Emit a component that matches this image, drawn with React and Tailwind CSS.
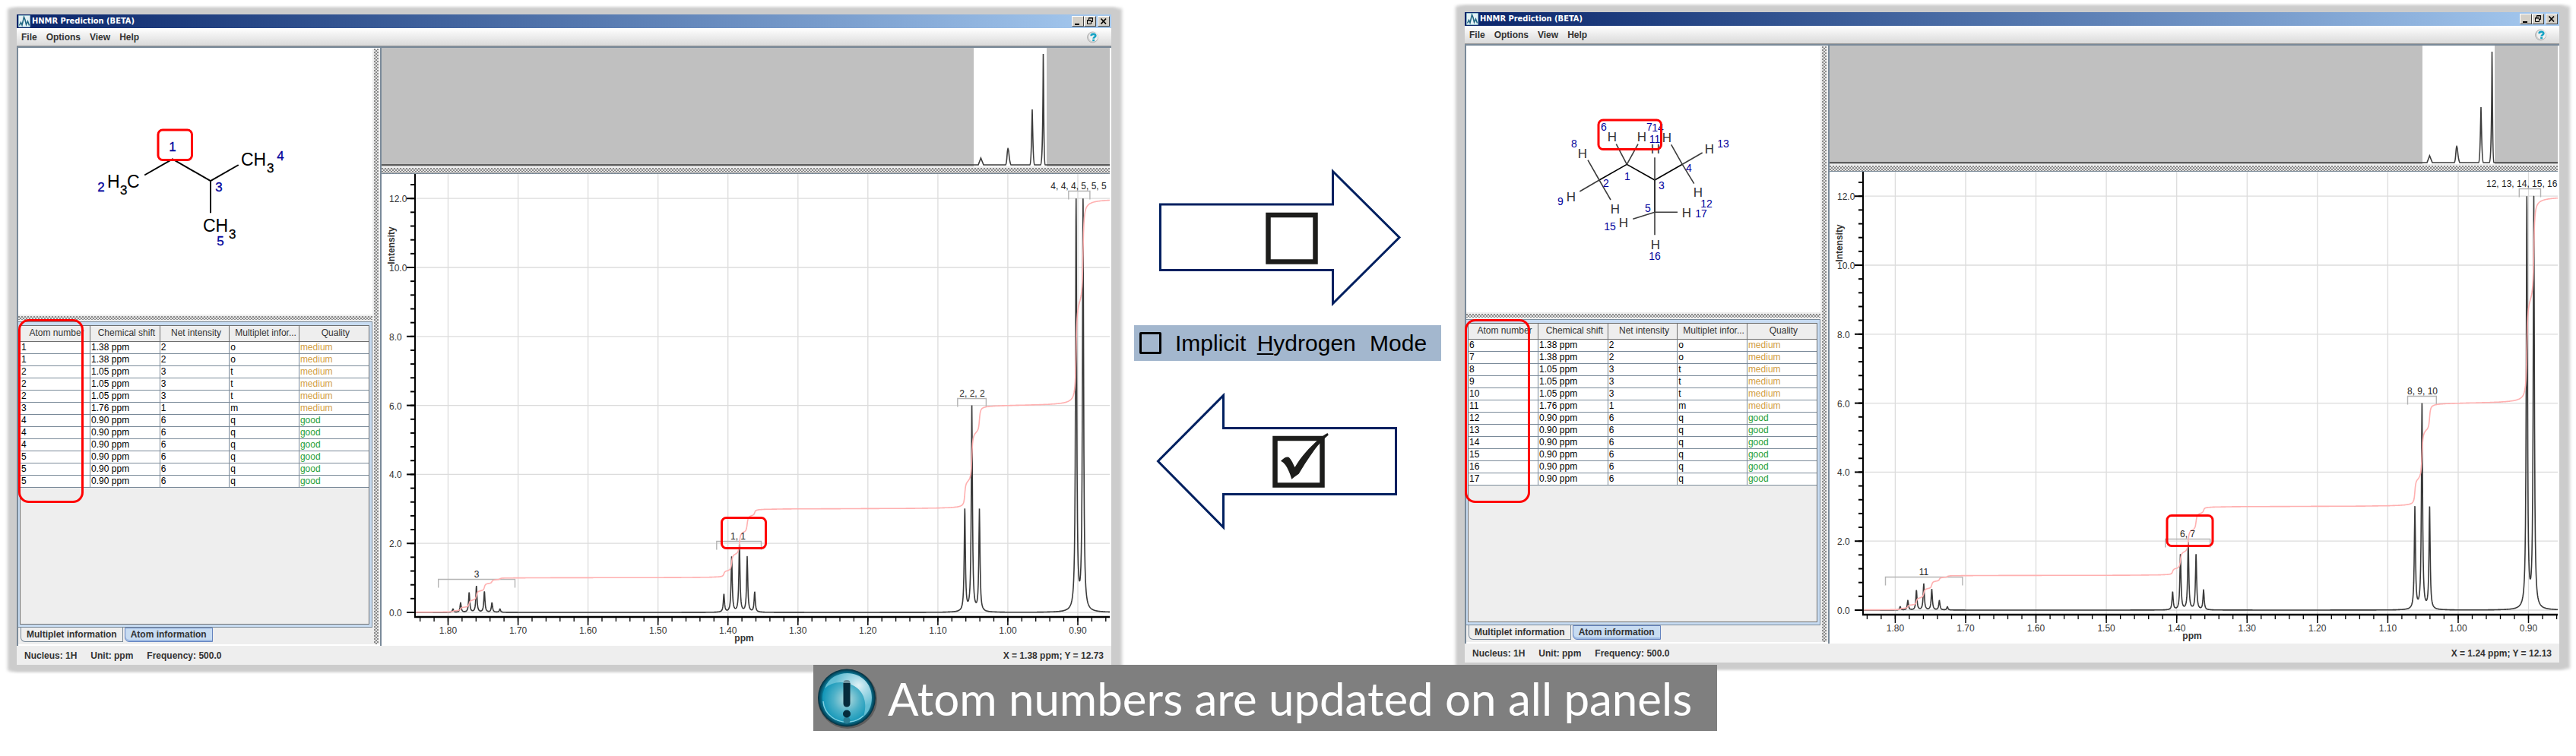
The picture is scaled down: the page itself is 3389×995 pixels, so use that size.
import React from "react";
import { clsx } from "clsx";

const SANS = "font-['Liberation_Sans',Arial,sans-serif]";

/* ---------- spectrum data ---------- */

// Lorentzian lines: [ppm, height, area]
const LINES = [
  [1.793, 0.1, 0.035],
  [1.7821, 0.28, 0.1],
  [1.7699, 0.57, 0.21],
  [1.7595, 0.76, 0.28],
  [1.7481, 0.6, 0.22],
  [1.7373, 0.28, 0.11],
  [1.7259, 0.1, 0.045],
  [1.4058, 0.52, 0.17],
  [1.3947, 1.6, 0.5],
  [1.3836, 1.95, 0.66],
  [1.3725, 1.6, 0.5],
  [1.3618, 0.58, 0.17],
  [1.0615, 2.95, 0.75],
  [1.0514, 5.95, 1.5],
  [1.0406, 2.95, 0.75],
  [0.9024, 12, 3],
  [0.8925, 12, 3],
];

const ELEMENTS_IMPLICIT = ["1", "1", "2", "2", "2", "3", "4", "4", "4", "5", "5", "5"];
const ELEMENTS_EXPLICIT = ["6", "7", "8", "9", "10", "11", "12", "13", "14", "15", "16", "17"];

function signalOf(index) {
  if (index < 2) return ["1.38 ppm", "2", "o", "medium"];
  if (index < 5) return ["1.05 ppm", "3", "t", "medium"];
  if (index < 6) return ["1.76 ppm", "1", "m", "medium"];
  return ["0.90 ppm", "6", "q", "good"];
}

const yOf = (v) => 787 - v * 45.4;

function buildCurves(x180, perPpm) {
  const lines = LINES.map(([p, h, a]) => [x180 + (1.8 - p) * perPpm, h, a]);
  const w = 0.9;
  const spectrum = [];
  const integral = [];
  const sample = (x) => {
    let s = 0;
    for (const [c, h] of lines) s += h / (1 + ((x - c) / w) ** 2);
    spectrum.push(x.toFixed(2) + "," + yOf(Math.min(s, 12)).toFixed(1));
  };
  for (let x = 525; x <= 1438; x += 0.5) {
    sample(x);
    for (const [c] of lines) if (c > x && c < x + 0.5) sample(c);
    let t = 0;
    for (const [c, , a] of lines) t += a * (0.5 + Math.atan((x - c) / w) / Math.PI);
    integral.push(x + "," + yOf(t).toFixed(1));
  }
  return { spectrum: spectrum.join(" "), integral: integral.join(" ") };
}

/* ---------- icons ---------- */

function AppIcon() {
  return (
    <svg viewBox="0 0 16 16" className="size-4 shrink-0" aria-hidden="true">
      <rect width="16" height="16" rx="1" fill="#8fbccb" />
      <rect x="1" y="1" width="14" height="14" fill="#e4f1f5" />
      <path
        d="M1.5 13.5 L3.5 9.5 L5 13 L7.5 2.5 L9 6 L10.5 12.5 L12.5 8 L14.5 13.5"
        fill="none"
        stroke="#1d6580"
        strokeWidth="1.5"
      />
    </svg>
  );
}

function HelpIcon() {
  return (
    <svg viewBox="0 0 16 16" className="size-4" aria-hidden="true">
      <circle cx="7.5" cy="8" r="7" fill="#cfcfcf" stroke="#b4b4b4" />
      <circle cx="8.5" cy="7.5" r="6" fill="#f0f0f0" />
      <path
        d="M5.6 6.2 C5.6 3.2 11.4 3 11.4 6 C11.4 7.9 8.6 7.7 8.6 9.8"
        fill="none"
        stroke="#17a3c4"
        strokeWidth="2.6"
      />
      <rect x="7.2" y="10.8" width="2.8" height="2.4" fill="#17a3c4" />
    </svg>
  );
}

function CaptionButton({ label, children }) {
  return (
    <button
      type="button"
      aria-label={label}
      className="h-3.5 w-4 border border-t-white border-r-[#404040] border-b-[#404040] border-l-white bg-[#d4d0c8]"
    >
      <svg viewBox="0 0 14 12" className="h-3 w-3.5" aria-hidden="true">
        {children}
      </svg>
    </button>
  );
}

function AlertIcon() {
  return (
    <svg viewBox="0 0 80 80" className="size-20 shrink-0" aria-hidden="true">
      <defs>
        <radialGradient id="alert-rim" cx="50%" cy="50%" r="50%">
          <stop offset="82%" stopColor="#0d86a5" />
          <stop offset="93%" stopColor="#055169" />
          <stop offset="100%" stopColor="#032a38" />
        </radialGradient>
        <radialGradient id="alert-core" cx="50%" cy="52%" r="50%">
          <stop offset="0%" stopColor="#b5dadd" />
          <stop offset="55%" stopColor="#4eb1c8" />
          <stop offset="100%" stopColor="#1296b8" />
        </radialGradient>
        <radialGradient id="alert-gloss" cx="72%" cy="28%" r="50%">
          <stop offset="0%" stopColor="#ffffff" />
          <stop offset="35%" stopColor="#c5e8f1" />
          <stop offset="100%" stopColor="#6fc4d8" />
        </radialGradient>
      </defs>
      <ellipse cx="41" cy="41" rx="39" ry="39" fill="#5d5d5d" />
      <circle cx="40" cy="39.500" r="38" fill="url(#alert-rim)" />
      <circle cx="40" cy="40" r="32" fill="url(#alert-core)" />
      <path
        d="M11 27 C16 13 28 7 41 7 C59 7 73 21 73 39 C73 51 68 60 62 64 C68 46 62 31 50 24 C36 16 21 18 11 27 Z"
        fill="url(#alert-gloss)"
        opacity="0.85"
      />
      <path d="M9 44 C10 62 27 73 44 71 C54 70 59 66 62 63" fill="none" stroke="#7fd0e2" strokeWidth="1.5" />
      <rect x="35.500" y="16" width="9" height="12" rx="4" fill="#6b8f9b" />
      <path d="M35.500 20 H44.500 V47 C44.500 53 35.500 53 35.500 47 Z" fill="#052b3c" />
      <circle cx="40" cy="69" r="4.500" fill="#2b7e95" />
      <circle cx="40" cy="60.500" r="5" fill="#052b3c" />
    </svg>
  );
}

/* ---------- molecules ---------- */

function ImplicitMolecule() {
  return (
    <svg viewBox="0 0 466 351" className={clsx("block w-full bg-white", SANS)} role="img" aria-label="Structure with implicit hydrogens">
      <path d="M167 167 L203 146.500 L253 175 L289 154.500 M253 175 V216.500" fill="none" stroke="#000" strokeWidth="2" strokeLinecap="round" />
      <g fill="#000" fontSize="23">
        <text x="117" y="184">H</text>
        <text x="143" y="184">C</text>
        <text x="293" y="155">CH</text>
        <text x="243" y="242">CH</text>
      </g>
      <g fill="#000" stroke="#000" strokeWidth="0.3" fontSize="17">
        <text x="134" y="193">3</text>
        <text x="327" y="164">3</text>
        <text x="277" y="251">3</text>
      </g>
      <g fill="#00009c" stroke="#00009c" strokeWidth="0.3" fontSize="17" textAnchor="middle">
        <text x="203" y="136">1</text>
        <text x="109" y="189">2</text>
        <text x="264" y="189">3</text>
        <text x="345" y="148">4</text>
        <text x="266" y="260">5</text>
      </g>
      <rect x="184" y="108" width="44.500" height="39.500" rx="6" fill="none" stroke="#ff0000" strokeWidth="3" />
    </svg>
  );
}

const HYDROGENS = [
  [192, 120], [231, 120], [153, 142], [138, 199], [196, 215], [249, 136],
  [264, 121], [320, 136], [305, 193], [207, 233], [290, 220], [249, 262],
];

const ATOM_NUMBERS = [
  ["6", 181, 107], ["7", 241, 107], ["14", 252, 108], ["11", 248, 123], ["8", 142, 129],
  ["13", 338, 129], ["4", 293, 161], ["1", 212, 172], ["2", 184, 181], ["3", 257, 184],
  ["12", 316, 208], ["9", 124, 205], ["5", 239, 214], ["17", 309, 221], ["15", 189, 238], ["16", 248, 277],
];

function ExplicitMolecule() {
  return (
    <svg viewBox="0 0 466 351" className={clsx("block w-full bg-white", SANS)} role="img" aria-label="Structure with explicit hydrogens">
      <path d="M175 177 L211.300 156.300 L248 177 L284.300 156.300 M248 177 V219.300" fill="none" stroke="#000" strokeWidth="1.6" />
      <path
        d="M211.300 156.300 L197.300 129.700 M211.300 156.300 L226 129.700 M175 177 L160 150.700 M175 177 L149.300 192 M175 177 L190 203 M248 177 V147.300 M284.300 156.300 L269.700 130.300 M284.300 156.300 L310.700 141 M284.300 156.300 L299.700 181.700 M248 219.300 L219.300 228.300 M248 219.300 H278 M248 219.300 V249.300"
        fill="none"
        stroke="#3c3c3c"
        strokeWidth="1.6"
      />
      <g fill="#333" fontSize="17" textAnchor="middle">
        {HYDROGENS.map(([x, y]) => (
          <text key={x + "-" + y} x={x} y={y + 6}>H</text>
        ))}
      </g>
      <g fill="#00009c" fontSize="14" textAnchor="middle">
        {ATOM_NUMBERS.map(([n, x, y]) => (
          <text key={n} x={x} y={y + 5}>{n}</text>
        ))}
      </g>
      <rect x="174" y="98" width="82.500" height="38.500" rx="6" fill="none" stroke="#ff0000" strokeWidth="3" />
    </svg>
  );
}

/* ---------- charts ---------- */

function Overview({ shift }) {
  const at = (x) => x + shift;
  return (
    <svg viewBox="480 44 958 156" className="block w-full" role="img" aria-label="Spectrum overview">
      <rect x="480" y="44" width="958" height="156" fill="#c0c0c0" />
      <rect x={at(1259)} y="44" width={96 - shift} height="156" fill="#fff" />
      <path
        d={`M480 198 H${at(1265)} L${at(1268.4)} 189 L${at(1272)} 198 H${at(1301)} C${at(1303)} 196 ${at(1303)} 176 ${at(1304)} 176 C${at(1305.5)} 176 ${at(1305)} 192 ${at(1308)} 198 H${at(1333)} C${at(1335)} 196 ${at(1335)} 160 ${at(1336)} 125 C${at(1337)} 160 ${at(1337)} 196 ${at(1339)} 198 H${at(1347)} C${at(1350)} 196 ${at(1350)} 120 ${at(1350.5)} 52 C${at(1351.5)} 120 ${at(1351)} 196 ${at(1353)} 198 H1438`}
        fill="none"
        stroke="#3c3c3c"
        strokeWidth="1.6"
      />
    </svg>
  );
}

function Bracket({ x1, x2, y }) {
  return <path d={`M${x1} ${y + 11} V${y} H${x2} V${y + 11}`} fill="none" stroke="#b4b4b4" strokeWidth="1.4" />;
}

function Spectrum({ x180, perPpm, labels, marker }) {
  const { spectrum, integral } = buildCurves(x180, perPpm);
  const px = (p) => Math.round((x180 + (1.8 - p) * perPpm) * 10) / 10;
  const majorX = Array.from({ length: 10 }, (_, i) => 1.8 - i * 0.1);
  const minorX = Array.from({ length: 50 }, (_, i) => 1.84 - i * 0.02);
  const majorY = [0, 2, 4, 6, 8, 10, 12];
  const minorY = Array.from({ length: 32 }, (_, i) => i * 0.4);
  return (
    <svg viewBox="480 210 958 621" className={clsx("block w-full bg-white", SANS)} role="img" aria-label="Predicted spectrum">
      <g stroke="#dcdcdc" strokeWidth="1.3">
        {majorX.map((p) => <line key={p} x1={px(p)} x2={px(p)} y1="210" y2="793" />)}
        {majorY.map((v) => <line key={v} x1="524" x2="1438" y1={yOf(v)} y2={yOf(v)} />)}
      </g>
      <Bracket x1={px(1.8139)} x2={px(1.7044)} y={743.5} />
      <Bracket x1={px(1.4162)} x2={px(1.3524)} y={693.5} />
      <Bracket x1={px(1.0718)} x2={px(1.031)} y={505.5} />
      <Bracket x1={px(0.9132)} x2={px(0.8827)} y={232.5} />
      <polyline points={spectrum} fill="none" stroke="#3a3a3a" strokeWidth="1.6" strokeLinejoin="bevel" />
      <polyline points={integral} fill="none" stroke="#ffb0b0" strokeWidth="1.6" />
      <g stroke="#000" strokeWidth="2">
        <line x1="524" x2="524" y1="210" y2="794" />
        <line x1="523" x2="1438" y1="793" y2="793" strokeWidth="2.500" />
        {minorY.map((v) => <line key={v} x1="518" x2="524" y1={yOf(v)} y2={yOf(v)} />)}
        {majorY.map((v) => <line key={v} x1="513" x2="524" y1={yOf(v)} y2={yOf(v)} />)}
        {minorX.map((p) => <line key={p} x1={px(p)} x2={px(p)} y1="793" y2="799" strokeWidth="1.3" />)}
        {majorX.map((p) => <line key={p} x1={px(p)} x2={px(p)} y1="793" y2="804" strokeWidth="1.5" />)}
      </g>
      <g fill="#333" fontSize="12">
        {majorY.map((v) => <text key={v} x="490" y={Math.round(yOf(v)) + 5}>{v.toFixed(1)}</text>)}
        {majorX.map((p) => <text key={p} x={px(p)} y="815" textAnchor="middle">{p.toFixed(2)}</text>)}
        <text x="957" y="825" textAnchor="middle" fontWeight="bold">ppm</text>
        <text x="497" y="304" textAnchor="middle" fontWeight="bold" transform="rotate(-90 497 304)">Intensity</text>
      </g>
      <g fill="#222" fontSize="12">
        {labels.map(([text, x, y, anchor]) => (
          <text key={text} x={x} y={y} textAnchor={anchor}>{text}</text>
        ))}
      </g>
      <rect x={marker.x} y="662.500" width={marker.w} height="40" rx="6" fill="none" stroke="#ff0000" strokeWidth="3" />
    </svg>
  );
}

/* ---------- window ---------- */

function AtomTable({ numbers }) {
  const heads = ["Atom number", "Chemical shift", "Net intensity", "Multiplet infor...", "Quality"];
  return (
    <table className="w-full table-fixed border-collapse text-[12px] leading-[15px]">
      <thead>
        <tr className="h-5">
          {heads.map((h) => (
            <th key={h} scope="col" className="overflow-hidden border-r border-b border-[#6e6e6e] bg-[#eee] p-0 pl-1 text-center font-normal whitespace-nowrap text-[#333] last:border-r-0">
              {h}
            </th>
          ))}
        </tr>
      </thead>
      <tbody>
        {numbers.map((n, i) => {
          const cells = [n, ...signalOf(i)];
          return (
            <tr key={i} className="h-4 bg-white">
              {cells.map((c, j) => (
                <td
                  key={j}
                  className={clsx(
                    "h-4 border-r border-b border-[#7a8a99] p-0 pl-px last:border-r-0",
                    j < 4 && "text-black",
                    j === 4 && c === "medium" && "text-[#d2a046]",
                    j === 4 && c === "good" && "text-[#1fa038]",
                  )}
                >
                  {c}
                </td>
              ))}
            </tr>
          );
        })}
      </tbody>
    </table>
  );
}

const DOTS = "bg-[#e4e4e4] bg-[radial-gradient(circle_at_1px_1px,#8a8a8a_0.8px,transparent_1px),radial-gradient(circle_at_3px_3px,#8a8a8a_0.8px,transparent_1px)] bg-[length:4px_4px]";

function PredictionWindow({ className, molecule, numbers, frameClass, overviewShift, spectrum, cursor }) {
  return (
    <section className={clsx("relative flex min-w-0 flex-1 flex-col bg-[#eee] shadow-[0_0_4px_8px_#ccc,6px_0_4px_8px_#ccc,-4px_0_4px_8px_#ccc]", SANS, className)}>
      <header className="flex h-[18px] items-center bg-linear-to-r from-[#0a246a] to-[#a6caf0] px-0.5">
        <AppIcon />
        <h2 className="ml-0.5 font-['DejaVu_Sans_Condensed','DejaVu_Sans',sans-serif] text-[11px] leading-4 font-bold whitespace-nowrap text-white">
          HNMR Prediction (BETA)
        </h2>
        <div className="ml-auto flex">
          <CaptionButton label="Minimize"><rect x="3" y="9" width="6" height="2" fill="#000" /></CaptionButton>
          <CaptionButton label="Restore">
            <path d="M5.500 4 V1.500 H10.500 V6.500 H8.500 M5 2 H11 M3.500 4.500 H8.500 V9.500 H3.500 Z M3 5 H9" fill="none" stroke="#000" />
          </CaptionButton>
          <span className="w-0.5" />
          <CaptionButton label="Close"><path d="M3.500 2.500 L10 9.500 M10 2.500 L3.500 9.500" stroke="#000" strokeWidth="1.700" /></CaptionButton>
        </div>
      </header>
      <nav className="flex h-6 items-center gap-3 border-b border-[#9a9a9a] bg-linear-to-b from-white to-[#dadada] pr-4 pl-1.5 text-[12px] leading-4 font-bold text-[#333]">
        <button type="button">File</button>
        <button type="button">Options</button>
        <button type="button">View</button>
        <button type="button">Help</button>
        <button type="button" aria-label="Help contents" className="ml-auto"><HelpIcon /></button>
      </nav>

      <div className="flex border-t-2 border-[#7a8a99] bg-white">
        <div className="flex w-[468px] shrink-0 flex-col border-l-2 border-[#7a8a99]">
          {molecule}
          <div className={clsx("h-[9px] border-y-2 border-[#eee]", DOTS)} />
          <div className="flex flex-1 flex-col border border-l-0 border-[#7a8a99] bg-[#c8dcf2] pt-1 pr-[3px] pb-[3px] pl-0.5">
            <div className="flex-1 border border-[#6e6e6e] bg-[#eee]">
              <AtomTable numbers={numbers} />
            </div>
          </div>
          <div role="tablist" className="mb-0.5 flex h-[22px] items-start gap-0.5 bg-[#eee] pl-[3px] text-[12px] font-bold text-[#333]">
            <button type="button" role="tab" aria-selected="false" className="h-[19px] rounded-bl-md border border-t-0 border-[#7a8a99] bg-[#eee] px-[7px] leading-[18px] whitespace-nowrap">
              Multiplet information
            </button>
            <button type="button" role="tab" aria-selected="true" className="h-[19px] rounded-bl-md border border-[#6382bf] bg-[#c8dcf2] px-[7px] leading-[17px] whitespace-nowrap shadow-[inset_0_-2px_0_#9fbbe4]">
              Atom information
            </button>
          </div>
        </div>
        <div className={clsx("mt-px mb-0.5 w-[10px] shrink-0 border-x-2 border-[#eee]", DOTS)} />
        <div className="min-w-0 flex-1 border-r-2 border-l-2 border-r-white border-l-[#7a8a99]">
          <Overview shift={overviewShift} />
          <div className={clsx("h-[10px] border-t-2 border-b border-t-[#eee] border-b-[#7a8a99]", DOTS)} />
          <Spectrum {...spectrum} />
        </div>
      </div>

      <footer className="flex h-[25px] items-center gap-[18px] px-[10px] text-[12px] leading-4 font-bold text-[#333]">
        <span>Nucleus: 1H</span>
        <span>Unit: ppm</span>
        <span>Frequency: 500.0</span>
        <span className="ml-auto">{cursor}</span>
      </footer>

      <div className={clsx("pointer-events-none absolute h-[242px] w-[86px] rounded-[14px] border-[3px] border-[#ff0000]", frameClass)} />
    </section>
  );
}

/* ---------- page ---------- */

const LEFT_SPECTRUM = {
  x180: 567.5,
  perPpm: 920.5,
  marker: { x: 927.5, w: 58 },
  labels: [
    ["3", 605, 741, "middle"],
    ["1, 1", 949, 691, "middle"],
    ["2, 2, 2", 1257, 503, "middle"],
    ["4, 4, 4, 5, 5, 5", 1397, 230, "middle"],
  ],
};

const RIGHT_SPECTRUM = {
  x180: 566.4,
  perPpm: 925.7,
  marker: { x: 924, w: 60 },
  labels: [
    ["11", 604, 741, "middle"],
    ["6, 7", 951, 691, "middle"],
    ["8, 9, 10", 1260, 503, "middle"],
    ["12, 13, 14, 15, 16", 1344, 230, "start"],
  ],
};

export default function App() {
  return (
    <div className="min-h-screen bg-white">
      <main className="flex items-start px-[22px]">
        <PredictionWindow
          className="mt-[19px]"
          molecule={<ImplicitMolecule />}
          numbers={ELEMENTS_IMPLICIT}
          frameClass="top-[401px] left-[2px]"
          overviewShift={0}
          spectrum={LEFT_SPECTRUM}
          cursor="X = 1.38 ppm; Y = 12.73"
        />

        <div className={clsx("flex w-[465px] shrink-0 flex-col items-start pt-[221px] pl-[30px]", SANS)}>
          <svg viewBox="0 0 324 182" className="ml-[29px] w-[324px]" role="img" aria-label="Mode switched off">
            <path d="M5.500 48 H232.500 V4.500 L320 91.500 L232.500 178.500 V134.500 H5.500 Z" fill="#fff" stroke="#002060" strokeWidth="3" />
            <rect x="147.500" y="62" width="62" height="61.500" fill="#fff" stroke="#1d1d1b" strokeWidth="6.500" />
          </svg>
          <label className="mt-[25px] mb-[41px] flex h-[47px] w-[404px] items-center bg-[#a3b7ce] pl-[7px] text-[30px] leading-[46px] whitespace-nowrap text-black">
            <input type="checkbox" className="mr-[18px] size-[29px] shrink-0 appearance-none rounded-xs border-[3px] border-black" />
            <span>
              Implicit <span className="ml-1.5 underline decoration-2 underline-offset-3">H</span>ydrogen <span className="ml-2.5">Mode</span>
            </span>
          </label>
          <svg viewBox="0 0 324 182" className="ml-[29px] w-[324px]" role="img" aria-label="Mode switched on">
            <path d="M2.500 91 L88.500 4.500 V47.500 H315.500 V134.500 H88.500 V178 Z" fill="#fff" stroke="#002060" strokeWidth="3" />
            <rect x="156.500" y="61" width="62" height="61.500" fill="#fff" stroke="#1d1d1b" strokeWidth="6.500" />
            <path
              d="M164 90.700 C168 86.500 171 85 173.500 85.500 C177 86.500 179.500 93 182.500 99 C191 84.500 202 73 213 62.800 C218 58.700 222 55.500 225.500 54 L226.800 56.600 C218 64 212 71 205.500 80.300 C198 90.700 193 99 187.700 107.700 C184 110 181 112.500 178.300 114.700 C177 110.500 176 107 174 103 C172 98 168.500 92.700 164 90.700 Z"
              fill="#1d1d1b"
            />
          </svg>
        </div>

        <PredictionWindow
          className="mt-4"
          molecule={<ExplicitMolecule />}
          numbers={ELEMENTS_EXPLICIT}
          frameClass="top-[404px] left-0"
          overviewShift={1}
          spectrum={RIGHT_SPECTRUM}
          cursor="X = 1.24 ppm; Y = 12.13"
        />
      </main>

      <div className="relative z-10 flex justify-center pr-[60px]">
        <p className="flex h-[87px] w-[1189px] items-center gap-3.5 bg-[#7f7f7f] pl-1 font-['Lato','Open_Sans',sans-serif] text-[60px] leading-[80px] whitespace-nowrap text-white">
          <AlertIcon />
          Atom numbers are updated on all panels
        </p>
      </div>
    </div>
  );
}
